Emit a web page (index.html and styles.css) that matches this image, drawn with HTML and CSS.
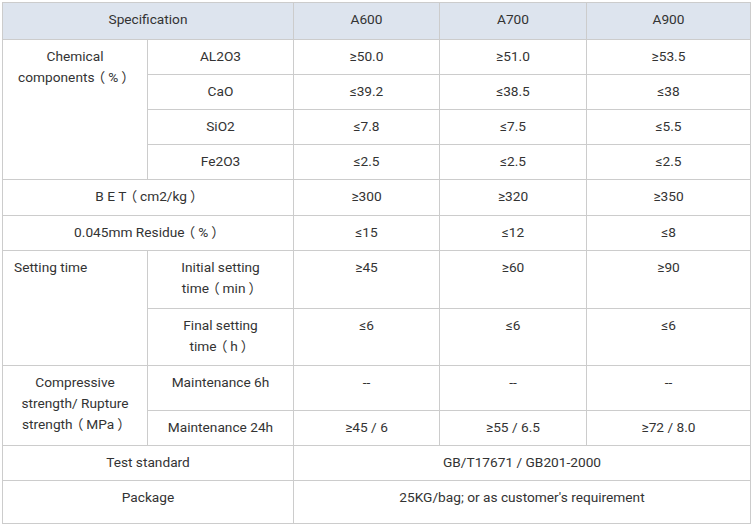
FILE: index.html
```html
<!DOCTYPE html>
<html lang="en">
<head>
<meta charset="utf-8">
<link rel="stylesheet" href="styles.css">
</head>
<body>
<div class="wrap">
<table class="spec">
<colgroup>
<col class="c1"><col class="c2"><col class="c3"><col class="c4"><col class="c5">
</colgroup>
<thead>
<tr class="h37"><th colspan="2">Specification</th><th>A600</th><th>A700</th><th>A900</th></tr>
</thead>
<tbody>
<tr class="h35"><td rowspan="4">Chemical <span class="nw">components<span class="fw">（</span>%<span class="fw">）</span></span></td><td>AL2O3</td><td>≥50.0</td><td>≥51.0</td><td>≥53.5</td></tr>
<tr class="h35"><td>CaO</td><td>≤39.2</td><td>≤38.5</td><td>≤38</td></tr>
<tr class="h35"><td>SiO2</td><td>≤7.8</td><td>≤7.5</td><td>≤5.5</td></tr>
<tr class="h35"><td>Fe2O3</td><td>≤2.5</td><td>≤2.5</td><td>≤2.5</td></tr>
<tr class="h36"><td colspan="2">B E T<span class="fw">（</span>cm2/kg<span class="fw">）</span></td><td>≥300</td><td>≥320</td><td>≥350</td></tr>
<tr class="h35"><td colspan="2">0.045mm Residue<span class="fw">（</span>%<span class="fw">）</span></td><td>≤15</td><td>≤12</td><td>≤8</td></tr>
<tr class="h58"><td rowspan="2" class="left">Setting time</td><td>Initial setting <span class="nw">time<span class="fw">（</span>min<span class="fw">）</span></span></td><td>≥45</td><td>≥60</td><td>≥90</td></tr>
<tr class="h57"><td>Final setting <span class="nw">time<span class="fw">（</span>h<span class="fw">）</span></span></td><td>≤6</td><td>≤6</td><td>≤6</td></tr>
<tr class="h45"><td rowspan="2">Compressive strength/ Rupture <span class="nw">strength<span class="fw">（</span>MPa<span class="fw">）</span></span></td><td>Maintenance 6h</td><td>--</td><td>--</td><td>--</td></tr>
<tr class="h35"><td>Maintenance 24h</td><td>≥45 / 6</td><td>≥55 / 6.5</td><td>≥72 / 8.0</td></tr>
<tr class="h35"><td colspan="2">Test standard</td><td colspan="3">GB/T17671 / GB201-2000</td></tr>
<tr class="h43"><td colspan="2">Package</td><td colspan="3">25KG/bag; or as customer's requirement</td></tr>
</tbody>
</table>
</div>
</body>
</html>
```

FILE: styles.css
```css
html, body {
  margin: 0;
  padding: 0;
  background: #ffffff;
}
.wrap {
  padding: 2px;
}
.spec {
  border-collapse: collapse;
  table-layout: fixed;
  width: 748px;
  font-family: Roboto, "Noto Sans CJK SC", sans-serif;
  font-size: 13.7px;
  line-height: 21px;
  color: #333333;
}
.c1 { width: 145px; }
.c2 { width: 146px; }
.c3 { width: 146px; }
.c4 { width: 147px; }
.c5 { width: 164px; }
.spec th,
.spec td {
  border: 1px solid #cccccc;
  padding: 6px 10px 7px;
  text-align: center;
  vertical-align: top;
  font-weight: normal;
}
.spec th {
  background: #dde4ee;
}
.spec td.left {
  text-align: left;
  padding-left: 11px;
}
.fw {
  display: inline-block;
  width: 1em;
  text-align: center;
  font-family: "Noto Sans CJK SC", sans-serif;
  font-feature-settings: "palt" 1;
  line-height: 10px;
}
.nw {
  white-space: nowrap;
}
.h35 { height: 35px; }
.h36 { height: 36px; }
.h37 { height: 37px; }
.h43 { height: 43px; }
.h45 { height: 45px; }
.h57 { height: 57px; }
.h58 { height: 58px; }
```
